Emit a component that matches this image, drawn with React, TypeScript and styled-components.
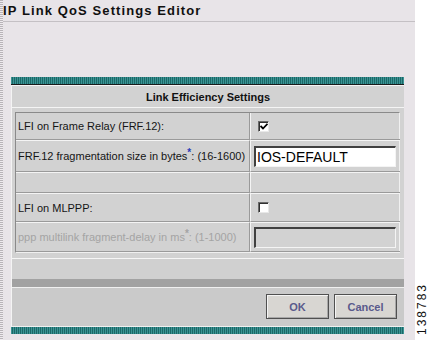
import React from "react";
import styled, { createGlobalStyle } from "styled-components";

const GlobalStyle = createGlobalStyle`
  html, body {
    margin: 0;
    padding: 0;
    background: #ffffff;
  }
  body {
    font-family: "Liberation Sans", Arial, sans-serif;
  }
`;

const Screen = styled.div`
  width: 428px;
  height: 340px;
  display: flex;
  overflow: hidden;
`;

const DottedEdge = styled.div`
  width: 3px;
  background: repeating-linear-gradient(
    180deg,
    #b8b4b8 0 1px,
    #eeeaee 1px 2px
  );
`;

const Main = styled.div`
  width: 412px;
  background: #e8e4e8;
  display: flex;
  flex-direction: column;
`;

const Title = styled.div`
  height: 22px;
  box-sizing: border-box;
  padding: 4px 0 0 0;
  font-size: 13px;
  font-weight: bold;
  letter-spacing: 1.1px;
  color: #101010;
  line-height: 13px;
  border-bottom: 1px solid #c4c0c4;
`;

const Dialog = styled.div`
  margin: 55px 0 0 8px;
  width: 393px;
  display: flex;
  flex-direction: column;
`;

const TealBar = styled.div`
  height: 7px;
  background: repeating-linear-gradient(
    90deg,
    #3a9494 0 1px,
    #1c6767 1px 2px
  );
  border-bottom: 1px solid #1a1a1a;
`;

const Panel = styled.div`
  background: #d2d2d2;
  border-left: 1px solid #f4f4f4;
  border-top: 1px solid #f4f4f4;
  display: flex;
  flex-direction: column;
`;

const SectionHeader = styled.div`
  height: 21px;
  display: flex;
  align-items: center;
  justify-content: center;
  font-size: 11px;
  font-weight: bold;
  color: #111;
  border-bottom: 1px solid #f4f4f4;
`;

const Table = styled.div`
  margin: 4px 4px 0 3px;
  display: grid;
  grid-template-columns: 234px 150px;
  border: 1px solid #8a8a8a;
  border-right-color: #f0f0f0;
  border-bottom-color: #f0f0f0;
  background: #d2d2d2;
`;

const Cell = styled.div<{ $h: number; $first?: boolean; $label?: boolean }>`
  height: ${(p) => p.$h}px;
  box-sizing: border-box;
  display: flex;
  align-items: center;
  padding-left: ${(p) => (p.$label ? 2 : 3)}px;
  border-top: ${(p) => (p.$first ? "none" : "1px solid #f4f4f4")};
  border-bottom: 1px solid #9a9a9a;
  border-left: ${(p) => (p.$label ? "none" : "1px solid #f4f4f4")};
  border-right: ${(p) => (p.$label ? "1px solid #9a9a9a" : "none")};
`;

const Label = styled.span<{ $disabled?: boolean }>`
  font-size: 11px;
  color: ${(p) => (p.$disabled ? "#a4a4a4" : "#151515")};
  white-space: nowrap;
`;

const Star = styled.sup<{ $disabled?: boolean }>`
  color: ${(p) => (p.$disabled ? "#a4a4a4" : "#2a3cb8")};
  font-size: 10px;
  font-weight: bold;
  line-height: 0;
  vertical-align: 4px;
`;

const Check = styled.span<{ $checked?: boolean }>`
  width: 11px;
  height: 11px;
  box-sizing: border-box;
  margin-left: 4px;
  background: #ffffff;
  border-top: 1px solid #6a6a6a;
  border-left: 1px solid #6a6a6a;
  border-right: 1px solid #e8e8e8;
  border-bottom: 1px solid #e8e8e8;
  box-shadow: inset 1px 1px 0 #303030;
  display: flex;
  align-items: center;
  justify-content: center;
`;

const TextBox = styled.div<{ $disabled?: boolean }>`
  width: 142px;
  height: 21px;
  box-sizing: border-box;
  background: ${(p) => (p.$disabled ? "#d2d2d2" : "#ffffff")};
  border-top: 2px solid #404040;
  border-left: 2px solid #404040;
  border-right: 1px solid #f4f4f4;
  border-bottom: 1px solid #f4f4f4;
  font-size: 14px;
  color: #000;
  padding-left: 1px;
  line-height: 18px;
`;

const Gap = styled.div`
  height: 5px;
  border-bottom: 1px solid #f6f6f6;
`;

const EmptyBand = styled.div`
  height: 20px;
  background: #d0d0d0;
`;

const DarkBar = styled.div`
  height: 8px;
  background: #a2a2a2;
  border-bottom: 1px solid #f0f0f0;
`;

const ButtonRow = styled.div`
  height: 39px;
  background: #cacaca;
  display: flex;
  justify-content: flex-end;
  align-items: flex-start;
  gap: 5px;
  padding: 6px 7px 0 0;
  box-sizing: border-box;
  border-bottom: 1px solid #f0f0f0;
`;

const Button = styled.button`
  width: 63px;
  height: 25px;
  background: #d8d6d2;
  border: 1px solid #505050;
  box-shadow: inset 1px 1px 0 #f4f4f4, inset -1px -1px 0 #a8a8a8;
  font-family: "Liberation Sans", Arial, sans-serif;
  font-size: 11px;
  font-weight: bold;
  color: #5a5a8c;
  padding: 0;
`;

const BottomBar = styled(TealBar)`
  border-bottom: none;
`;

const SideStrip = styled.div`
  flex: 1;
  background: #ffffff;
  display: flex;
  align-items: flex-end;
  justify-content: center;
  padding-bottom: 5px;
`;

const FigureNumber = styled.span`
  writing-mode: vertical-rl;
  transform: rotate(180deg);
  font-size: 12px;
  letter-spacing: 2px;
  color: #111;
  line-height: 12px;
`;

const CheckMark = () => (
  <svg width="8" height="7" viewBox="0 0 8 7">
    <path d="M0.5 3 L3 5.5 L7.5 0.8" stroke="#000" strokeWidth="1.8" fill="none" />
  </svg>
);

export default function App() {
  return (
    <>
      <GlobalStyle />
      <Screen>
        <DottedEdge />
        <Main>
          <Title>IP Link QoS Settings Editor</Title>
          <Dialog>
            <TealBar />
            <Panel>
              <SectionHeader>Link Efficiency Settings</SectionHeader>
              <Table>
                <Cell $h={27} $first $label>
                  <Label>LFI on Frame Relay (FRF.12):</Label>
                </Cell>
                <Cell $h={27} $first>
                  <Check $checked>
                    <CheckMark />
                  </Check>
                </Cell>
                <Cell $h={32} $label>
                  <Label>
                    FRF.12 fragmentation size in bytes<Star>*</Star>: (16-1600)
                  </Label>
                </Cell>
                <Cell $h={32}>
                  <TextBox>IOS-DEFAULT</TextBox>
                </Cell>
                <Cell $h={21} $label />
                <Cell $h={21} />
                <Cell $h={29} $label>
                  <Label>LFI on MLPPP:</Label>
                </Cell>
                <Cell $h={29}>
                  <Check />
                </Cell>
                <Cell $h={30} $label>
                  <Label $disabled>
                    ppp multilink fragment-delay in ms<Star $disabled>*</Star>: (1-1000)
                  </Label>
                </Cell>
                <Cell $h={30}>
                  <TextBox $disabled />
                </Cell>
              </Table>
              <Gap />
              <EmptyBand />
              <DarkBar />
              <ButtonRow>
                <Button>OK</Button>
                <Button>Cancel</Button>
              </ButtonRow>
            </Panel>
            <BottomBar />
          </Dialog>
        </Main>
        <SideStrip>
          <FigureNumber>138783</FigureNumber>
        </SideStrip>
      </Screen>
    </>
  );
}
